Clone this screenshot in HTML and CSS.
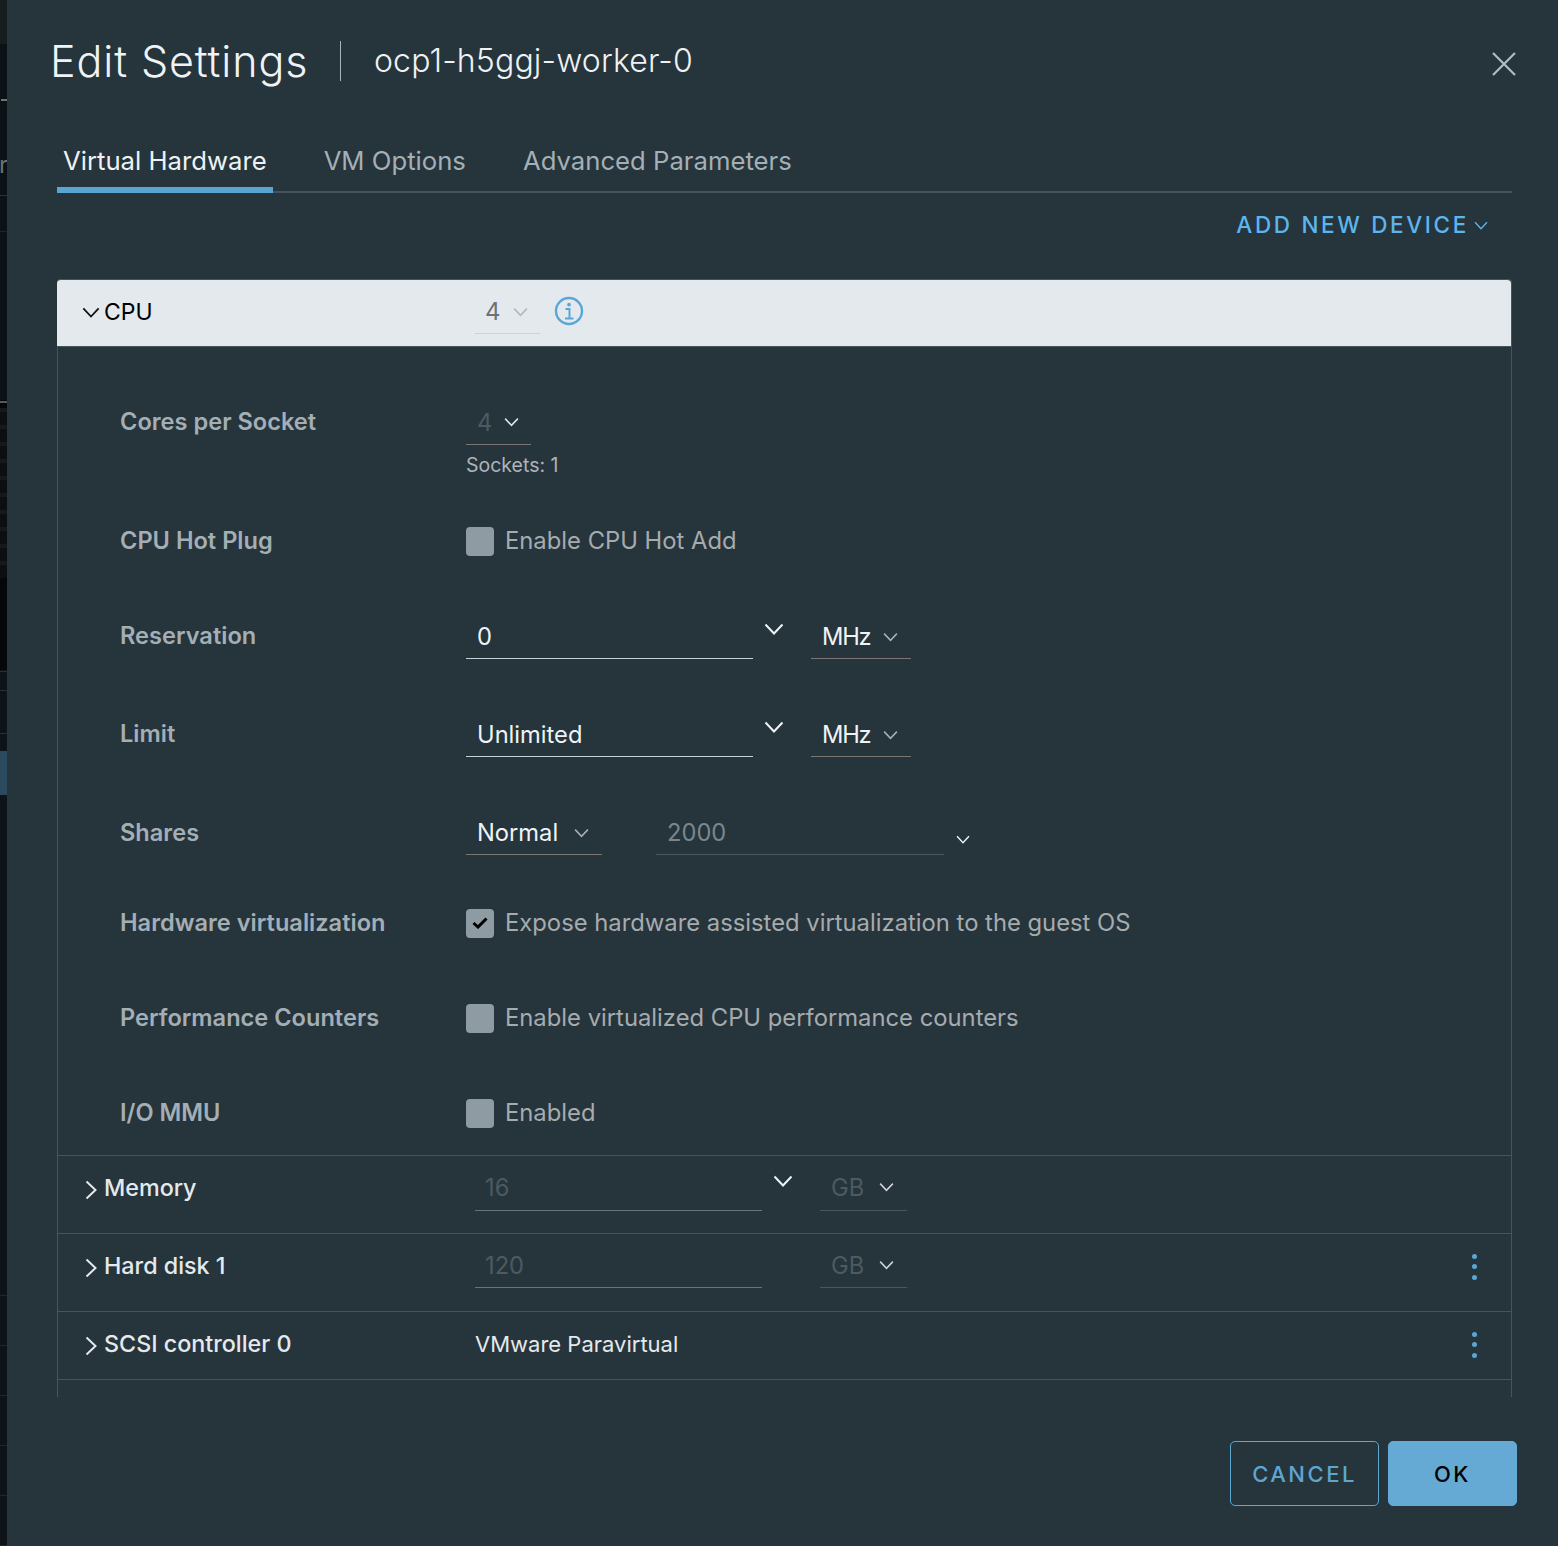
FILE: index.html
```html
<!DOCTYPE html>
<html lang="en">
<head>
<meta charset="utf-8">
<title>Edit Settings</title>
<link rel="stylesheet" href="styles.css">
</head>
<body>
<svg class="defs" width="0" height="0" aria-hidden="true">
  <symbol id="chev" viewBox="0 0 20 12"><path d="M1.5 1.5 10 10.5 18.5 1.5" fill="none" stroke="currentColor" stroke-width="2"/></symbol>
  <symbol id="right" viewBox="0 0 12 20"><path d="M1.5 1.5 10.5 10 1.5 18.5" fill="none" stroke="currentColor" stroke-width="2"/></symbol>
</svg>
<div class="backdrop"><span class="backdrop-letter">r</span></div>
<main class="modal">
  <header class="modal-head">
    <h1 class="title">Edit Settings</h1>
    <h2 class="subtitle">ocp1-h5ggj-worker-0</h2>
    <svg class="close" viewBox="0 0 24 24"><path d="M1 1 23 23M23 1 1 23" fill="none" stroke="currentColor" stroke-width="2.2"/></svg>
  </header>
  <nav class="tabs">
    <a class="tab active">Virtual Hardware</a>
    <a class="tab">VM Options</a>
    <a class="tab">Advanced Parameters</a>
  </nav>
  <div class="actions">
    <a class="add-device">ADD NEW DEVICE</a>
    <svg class="add-chev"><use href="#chev"/></svg>
  </div>
  <section class="accordion">
    <div class="cpu-head">
      <svg class="cpu-chev"><use href="#chev"/></svg>
      <span class="cpu-name">CPU</span>
      <div class="cpu-select"><span>4</span><svg class="chev-sm"><use href="#chev"/></svg></div>
      <svg class="info" viewBox="0 0 30 30"><circle cx="15" cy="15" r="13" fill="none" stroke="currentColor" stroke-width="2.4"/><circle cx="15" cy="8.6" r="1.9" fill="currentColor"/><path d="M11.5 13h4v9M11 22.5h8.5" fill="none" stroke="currentColor" stroke-width="2"/></svg>
    </div>
    <div class="cpu-body">
      <div class="label">Cores per Socket</div>
      <div class="ctrl"><div class="field w-cores line-brown"><span class="dim">4</span><svg class="chev-sm light"><use href="#chev"/></svg></div></div>

      <div></div>
      <div class="sockets">Sockets: 1</div>

      <div class="label">CPU Hot Plug</div>
      <label class="check"><span class="box"></span>Enable CPU Hot Add</label>

      <div class="label">Reservation</div>
      <div class="ctrl">
        <div class="field w-input line-light">0</div>
        <svg class="chev-lg"><use href="#chev"/></svg>
        <div class="field w-unit line-brown">MHz<svg class="chev-sm"><use href="#chev"/></svg></div>
      </div>

      <div class="label">Limit</div>
      <div class="ctrl">
        <div class="field w-input line-light">Unlimited</div>
        <svg class="chev-lg"><use href="#chev"/></svg>
        <div class="field w-unit line-brown">MHz<svg class="chev-sm"><use href="#chev"/></svg></div>
      </div>

      <div class="label">Shares</div>
      <div class="ctrl ctrl-shares">
        <div class="field w-normal line-brown">Normal<svg class="chev-sm"><use href="#chev"/></svg></div>
        <div class="field w-shares line-dim"><span class="muted">2000</span></div>
        <svg class="chev-xs"><use href="#chev"/></svg>
      </div>

      <div class="label">Hardware virtualization</div>
      <label class="check"><span class="box"><svg class="tick" viewBox="0 0 16 12"><path d="M1.5 6 6 10 14.5 1.5" fill="none" stroke="#000" stroke-width="3"/></svg></span>Expose hardware assisted virtualization to the guest OS</label>

      <div class="label">Performance Counters</div>
      <label class="check"><span class="box"></span>Enable virtualized CPU performance counters</label>

      <div class="label">I/O MMU</div>
      <label class="check"><span class="box"></span>Enabled</label>
    </div>

    <div class="device">
      <div class="dev-title"><svg class="dev-chev"><use href="#right"/></svg>Memory</div>
      <div class="field w-input line-dim2 disabled">16</div>
      <svg class="chev-lg"><use href="#chev"/></svg>
      <div class="field w-gb line-dim disabled">GB<svg class="chev-sm"><use href="#chev"/></svg></div>
    </div>
    <div class="device device-disk">
      <div class="dev-title"><svg class="dev-chev"><use href="#right"/></svg>Hard disk 1</div>
      <div class="field w-input line-dim2 disabled">120</div>
      <div class="spacer"></div>
      <div class="field w-gb line-dim disabled">GB<svg class="chev-sm"><use href="#chev"/></svg></div>
      <div class="kebab"><i></i><i></i><i></i></div>
    </div>
    <div class="device short">
      <div class="dev-title"><svg class="dev-chev"><use href="#right"/></svg>SCSI controller 0</div>
      <div class="dev-value">VMware Paravirtual</div>
      <div class="kebab"><i></i><i></i><i></i></div>
    </div>
    <div class="device-cut"></div>
  </section>
  <footer class="foot">
    <button class="btn outline">CANCEL</button>
    <button class="btn primary">OK</button>
  </footer>
</main>
</body>
</html>
```
FILE: styles.css
```css
* { box-sizing: border-box; }
html, body { margin: 0; height: 100%; }
body {
  display: flex;
  width: 1558px;
  height: 1546px;
  overflow: hidden;
  background: #26343c;
  color: #e8eef2;
  font-family: Inter, "Liberation Sans", sans-serif;
}
.defs { position: absolute; }

.backdrop {
  position: relative;
  flex: 0 0 7px;
  overflow: hidden;
  background:
    linear-gradient(#6f7477, #6f7477) 1px 99px / 6px 2px no-repeat,
    linear-gradient(#2b3236, #2b3236) 0 195px / 7px 1px no-repeat,
    linear-gradient(#1f2629, #1f2629) 0 231px / 7px 1px no-repeat,
    linear-gradient(#555a5d, #555a5d) 0 401px / 7px 2px no-repeat,
    repeating-linear-gradient(#14191b 0 4px, #0b0f11 4px 17px) 0 408px / 7px 170px no-repeat,
    linear-gradient(#2b4a5e, #2b4a5e) 0 751px / 7px 44px no-repeat,
    linear-gradient(#2a3034, #2a3034) 0 671px / 7px 1px no-repeat,
    linear-gradient(#2a3034, #2a3034) 0 690px / 7px 1px no-repeat,
    linear-gradient(#2a3034, #2a3034) 0 733px / 7px 1px no-repeat,
    repeating-linear-gradient(#20272b 0 1px, transparent 1px 50px) 0 1295px / 7px 251px no-repeat,
    linear-gradient(#171c1f, #171c1f) 0 0 / 7px 44px no-repeat,
    linear-gradient(#0b1114 0 400px, #050708 400px 670px, #0d1316 670px);
}
.backdrop-letter {
  position: absolute;
  left: -1px;
  top: 150px;
  font-size: 24px;
  line-height: 30px;
  color: #6b7174;
}

.modal {
  flex: 1;
  display: flex;
  flex-direction: column;
  padding: 0 46px 0 50px;
  background: #26343c;
}

.modal-head {
  display: flex;
  align-items: center;
  height: 132px;
  margin: 0 -5px 0 -7px;
  padding-bottom: 10px;
}
.title {
  position: relative;
  width: 291px;
  margin: 0;
  font-size: 43px;
  font-weight: 300;
  line-height: 40px;
  letter-spacing: 0.9px;
  color: #f0f3f5;
  white-space: nowrap;
}
.title::after {
  content: "";
  position: absolute;
  right: 0;
  top: 0;
  width: 1px;
  height: 40px;
  background: #aab4ba;
}
.subtitle {
  margin: 0 0 0 33px;
  font-size: 32px;
  font-weight: 300;
  line-height: 40px;
  letter-spacing: 0.15px;
  color: #eef2f4;
}
.close {
  width: 24px;
  height: 24px;
  margin-left: auto;
  margin-top: 6px;
  margin-right: 1px;
  color: #b3bcc1;
}

.tabs {
  display: flex;
  gap: 45px;
  height: 61px;
  border-bottom: 2px solid #47545e;
}
.tab {
  height: 61px;
  padding: 0 6px;
  font-size: 25.7px;
  line-height: 57px;
  color: #a4afb6;
}
.tab.active {
  color: #eef2f4;
  border-bottom: 6px solid #5aa5d2;
}

.actions {
  display: flex;
  justify-content: flex-end;
  align-items: center;
  height: 86px;
  padding: 0 24px 22px 0;
}
.add-device {
  font-size: 22.5px;
  font-weight: 500;
  letter-spacing: 2.65px;
  line-height: 24px;
  color: #5cb5ec;
}
.add-chev {
  width: 14px;
  height: 9px;
  margin-left: 5px;
  color: #5cb5ec;
}

.accordion {
  display: flex;
  flex-direction: column;
  height: 1118px;
  border-left: 1px solid #47545e;
  border-right: 1px solid #47545e;
  border-top-left-radius: 4px;
  border-top-right-radius: 4px;
}
.cpu-head {
  display: flex;
  align-items: center;
  flex: 0 0 68px;
  margin-left: -1px;
  padding-left: 25px;
  padding-bottom: 2px;
  background: #e4e9ed;
  border-top: 1px solid #47545e;
  border-bottom: 1px solid #47545e;
  border-radius: 4px 4px 0 0;
  color: #000;
}
.cpu-chev {
  width: 18px;
  height: 11px;
  margin-right: 4px;
  color: #111;
}
.cpu-name {
  width: 371px;
  font-size: 23px;
}
.cpu-select {
  display: flex;
  align-items: center;
  gap: 12px;
  width: 65px;
  height: 44px;
  padding-left: 10px;
  border-bottom: 1px solid #cdd2d6;
  font-size: 24px;
  color: #6d7276;
}
.cpu-select .chev-sm { color: #b3b8bc; }
.info {
  width: 30px;
  height: 30px;
  margin-left: 14px;
  margin-top: -3px;
  color: #5aa7d6;
}

.cpu-body {
  display: grid;
  flex: 0 0 808px;
  grid-template-columns: 346px 1fr;
  grid-template-rows: 54px 44px 96px 94px 102px 96px 84px 106px 84px;
  padding: 48px 0 0 62px;
  align-items: center;
}
.label {
  font-size: 23.6px;
  font-weight: 600;
  line-height: 28px;
  color: #a3aeb5;
}
.ctrl {
  display: flex;
  align-items: center;
}
.ctrl-shares { margin-top: -2px; }
.field {
  display: flex;
  align-items: center;
  justify-content: space-between;
  height: 46px;
  padding: 2px 13px 0 11px;
  font-size: 23.7px;
  color: #eef3f6;
  border-bottom: 1px solid;
}
.w-cores { width: 65px; justify-content: flex-start; gap: 12px; }
.w-cores .chev-sm { margin-top: -2px; }
.w-input { width: 287px; }
.w-unit { width: 100px; letter-spacing: -1.2px; }
.w-normal { width: 136px; margin-right: 54px; }
.w-shares { width: 288px; }
.w-gb { width: 87px; }
.line-light { border-color: #c3d0d7; }
.line-brown { border-color: #7b7672; }
.line-dim { border-color: #4b565c; }
.line-dim2 { border-color: #66737a; }
.dim { color: #4c5a62; }
.muted { color: #7a868d; }
.disabled { padding-top: 0; padding-left: 10px; color: #4c5a62; }
.w-gb.disabled { padding-left: 11px; }

.chev-sm { width: 15px; height: 10px; color: #aab0b3; flex: none; }
.chev-sm.light { color: #dfe5e8; }
.disabled .chev-sm { color: #cfd5d8; }
.chev-lg { width: 20px; height: 12px; flex: none; margin: -14px 27px 0 11px; color: #eef3f6; }
.chev-xs { width: 14px; height: 9px; flex: none; margin: 15px 0 0 12px; color: #eef3f6; }

.sockets {
  align-self: start;
  padding-top: 4px;
  font-size: 19.5px;
  line-height: 24px;
  color: #aeb4b8;
}
.check {
  display: flex;
  align-items: center;
  height: 31px;
  margin-bottom: 2px;
  font-size: 23.8px;
  color: #a6abae;
}
.box {
  display: flex;
  align-items: center;
  justify-content: center;
  width: 28px;
  height: 29px;
  margin: 2px 11px 0 0;
  border-radius: 4px;
  background: #8e9ba3;
}
.tick { width: 16px; height: 12px; }

.device {
  display: flex;
  align-items: center;
  flex: 0 0 78px;
  padding-bottom: 14px;
  border-top: 1px solid #47545e;
}
.device-disk .field { height: 44px; }
.device.short { flex-basis: 68px; padding-bottom: 4px; }
.dev-title {
  display: flex;
  align-items: center;
  width: 417px;
  padding-left: 27px;
  font-size: 23.3px;
  font-weight: 500;
  color: #e4e9ec;
}
.dev-chev {
  width: 12px;
  height: 20px;
  margin: 4px 7px 0 0;
  color: #e4e9ec;
}
.dev-value {
  font-size: 22px;
  color: #e4e9ec;
}
.spacer { width: 58px; flex: none; }
.kebab {
  display: flex;
  flex-direction: column;
  gap: 5.5px;
  margin: 2px 34px 0 auto;
}
.kebab i {
  width: 5px;
  height: 5px;
  border-radius: 50%;
  background: #5aa7d6;
}
.device-cut {
  flex: 0 0 18px;
  border-top: 1px solid #47545e;
}

.foot {
  display: flex;
  justify-content: flex-end;
  gap: 9px;
  margin-right: -5px;
  padding-top: 44px;
}
.btn {
  height: 65px;
  border-radius: 5px;
  font-family: inherit;
  font-size: 22px;
  font-weight: 500;
  letter-spacing: 2.5px;
}
.btn.outline {
  width: 149px;
  background: transparent;
  border: 1px solid #5ea6d2;
  color: #5ea6d2;
}
.btn.primary {
  width: 129px;
  background: #65a9d5;
  border: 1px solid #65a9d5;
  color: #000;
}
```
